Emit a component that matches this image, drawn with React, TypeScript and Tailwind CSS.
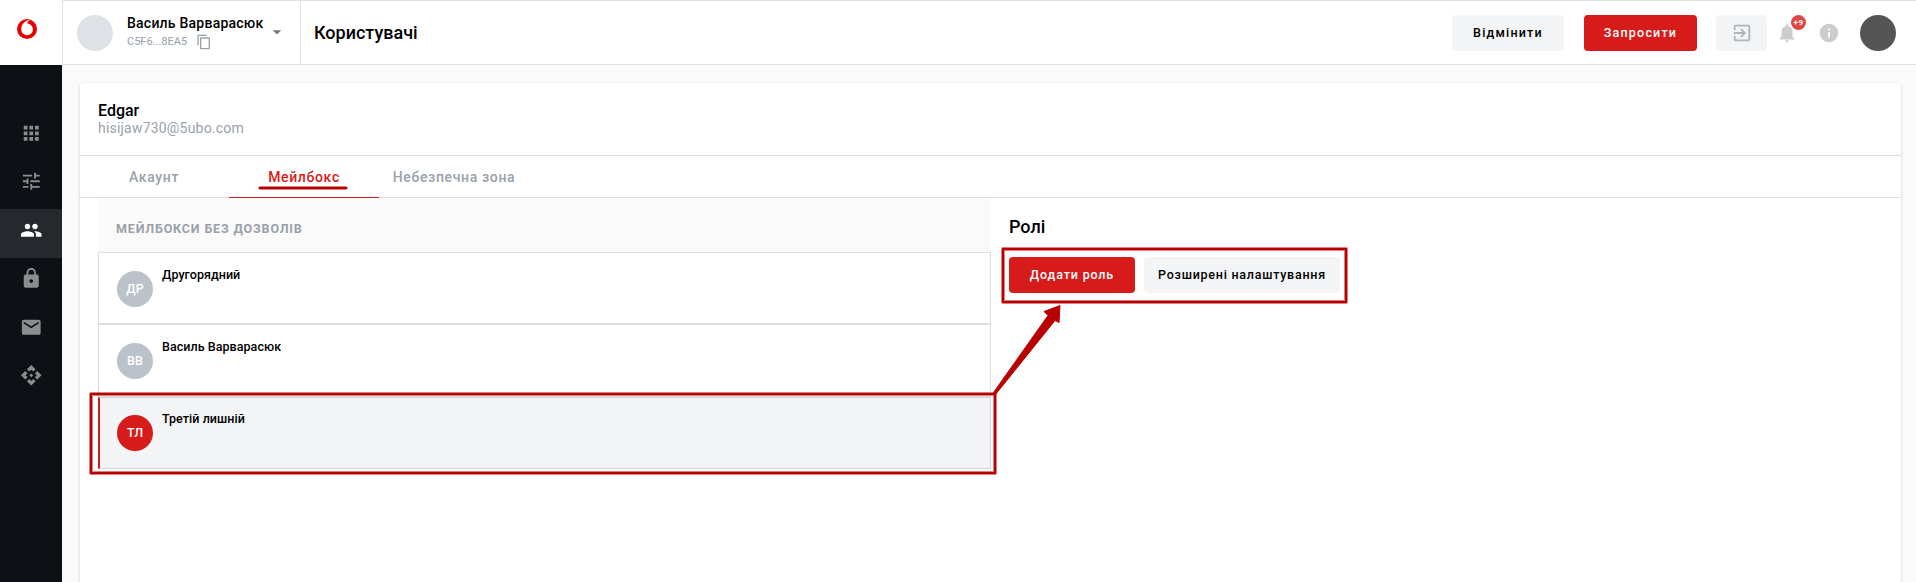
import { MdApps, MdTune, MdPeople, MdLock, MdEmail, MdApi, MdContentCopy, MdArrowDropDown, MdExitToApp, MdNotifications, MdInfo } from "react-icons/md";

const navItems = [
  { Icon: MdApps, label: "apps", active: false },
  { Icon: MdTune, label: "settings", active: false },
  { Icon: MdPeople, label: "users", active: true },
  { Icon: MdLock, label: "security", active: false },
  { Icon: MdEmail, label: "mail", active: false },
  { Icon: MdApi, label: "api", active: false },
];

const tabs = [
  { label: "Акаунт", active: false },
  { label: "Мейлбокс", active: true },
  { label: "Небезпечна зона", active: false },
];

const mailboxes = [
  { initials: "ДР", name: "Другорядний", selected: false, box: "h-[72px] border-[#dedede] pt-[18px] pl-[18px]" },
  { initials: "ВВ", name: "Василь Варварасюк", selected: false, box: "h-[73px] border-[#dedede] pt-[18px] pl-[18px]" },
  { initials: "ТЛ", name: "Третій лишній", selected: true, box: "h-[72px] border-[#d3d5d8] border-l-2 border-l-[#d71a1a] bg-[#f3f4f6] pt-[17px] pl-[17px]" },
];

function Logo() {
  return (
    <svg viewBox="0 0 20 20" className="size-5">
      <circle cx="10" cy="10" r="10" fill="#e60000" />
      <path d="M10.300 4.200C10.400 2.500 12 1.100 13.800.7 10.500 .6 4.200 3.600 4.200 10.300A5.900 5.900 0 0 0 10.100 16.200 5.800 5.800 0 0 0 15.900 10.400C15.900 7 13.400 5.100 10.300 4.200Z" fill="#fff" />
    </svg>
  );
}

function Sidebar() {
  return (
    <aside className="flex w-[62px] shrink-0 flex-col bg-[#0d1115]">
      <div className="flex h-[65px] justify-center bg-white pt-[19px] pr-[8px]"><Logo /></div>
      <nav className="mt-[47px] flex flex-col">
        {navItems.map(({ Icon, label, active }) => (
          <a key={label} aria-label={label} className={`flex h-[48.5px] items-center justify-center pb-[6.5px] ${active ? "bg-[#25282c] text-white" : "text-[#8a8c8e]"}`}>
            <Icon size={22.5} />
          </a>
        ))}
      </nav>
    </aside>
  );
}

function Header() {
  return (
    <header className="flex h-[65px] items-stretch border-y border-l border-[#dee2e6] bg-white">
      <div className="flex w-[238px] border-r border-[#dee2e6] pt-[14px] pl-[14px]">
        <div className="size-9 rounded-full bg-[#dee2e6]" />
        <div className="ml-[14px] -mt-[1px]">
          <div className="text-sm leading-[18px] font-medium tracking-[0.23px] whitespace-nowrap">Василь Варварасюк</div>
          <div className="flex items-center text-[11px] leading-[18px] text-[#98a1ab]">
            <span className="mt-px">C5F6...8EA5</span>
            <MdContentCopy size={16} className="mt-px ml-[9px]" />
          </div>
        </div>
        <MdArrowDropDown size={20} className="mt-[7px] ml-[4px] shrink-0 text-[#757575]" />
      </div>
      <h1 className="pt-5 pl-[13px] text-lg leading-6 font-medium">Користувачі</h1>
      <div className="ml-auto flex items-start pt-[14px] pr-5 text-[12.5px] font-medium tracking-[1.2px]">
        <button className="h-9 w-28 rounded bg-[#f3f4f6]">Відмінити</button>
        <button className="ml-5 h-9 w-[113px] rounded bg-[#d71a1a] text-white">Запросити</button>
        <button className="ml-[19px] flex h-9 w-[51px] items-center justify-center rounded bg-[#f3f4f6] text-[#adb5bd]"><MdExitToApp size={22} /></button>
        <div className="relative ml-[9px] flex h-9 w-[22px] items-center justify-center text-[#ccc]">
          <MdNotifications size={22} />
          <span className="absolute top-0 left-[15px] flex size-[15px] items-center justify-center rounded-full bg-[#e04848] text-[8px] leading-none font-bold tracking-[0.5px] text-white">+9</span>
        </div>
        <MdInfo size={22} className="mt-[7px] ml-5 text-[#ccc]" />
        <div className="ml-5 size-9 rounded-full bg-[#555]" />
      </div>
    </header>
  );
}

function MailboxList() {
  return (
    <section className="w-[893px]">
      <h2 className="flex h-[54px] items-center bg-[#fafafa] pt-[9px] pl-[18px] text-[12.5px] font-bold tracking-[0.85px] text-[#98a1ab]">МЕЙЛБОКСИ БЕЗ ДОЗВОЛІВ</h2>
      {mailboxes.map(({ initials, name, selected, box }) => (
        <div key={initials} className={`flex border ${box}`}>
          <div className={`flex size-9 items-center justify-center rounded-full text-[12.5px] font-medium text-white ${selected ? "bg-[#d71a1a]" : "bg-[#bcc2ca]"}`}>{initials}</div>
          <div className="-mt-[5px] ml-[9px] text-[12.5px] leading-[18px] font-medium tracking-[0.05px]">{name}</div>
        </div>
      ))}
    </section>
  );
}

function Annotations() {
  return (
    <svg className="pointer-events-none absolute inset-0" width="1916" height="582" fill="none" stroke="#b90000">
      <g strokeWidth="4" strokeLinejoin="round" strokeOpacity="0.5">
        <rect x="91" y="394" width="904" height="79" />
        <rect x="1003" y="249" width="343" height="53" />
      </g>
      <g strokeWidth="2">
        <rect x="91" y="394" width="904" height="79" />
        <rect x="1003" y="249" width="343" height="53" />
      </g>
      <path d="M260 188H346" strokeWidth="3" strokeLinecap="round" />
      <path d="M993.500 392.500 1048 315.500 1044 311.500 1060 305.500 1059 322.500 1055 320.500 995.500 394.500Z" fill="#b90000" stroke="#b90000" strokeWidth="1" strokeLinejoin="round" />
    </svg>
  );
}

export default function App() {
  return (
    <div className="relative flex h-[582px] w-[1916px] overflow-hidden bg-[#fafafa] font-['Roboto',sans-serif] text-black">
      <Sidebar />
      <div className="flex min-w-0 flex-1 flex-col">
        <Header />
        <main className="mt-[18px] mr-[15px] ml-[18px] flex-1 rounded-t bg-white shadow-[0_1px_3px_rgba(0,0,0,0.2)]">
          <div className="h-[73px] border-b border-[#dedede] pt-[19px] pl-[18px]">
            <div className="text-base leading-[18px] font-medium">Edgar</div>
            <div className="text-sm leading-[17px] tracking-[0.2px] text-[#98a1ab]">hisijaw730@5ubo.com</div>
          </div>
          <div className="-ml-px flex h-[42px] border-b border-[#dedede]">
            {tabs.map(({ label, active }) => (
              <button key={label} className={`h-[42px] w-[150px] text-sm font-medium tracking-[0.65px] whitespace-nowrap ${active ? "border-b border-[#d71a1a] text-[#d71a1a]" : "text-[#98a1ab]"}`}>{label}</button>
            ))}
          </div>
          <div className="flex pl-[18px]">
            <MailboxList />
            <section className="pt-[17px] pl-[18px]">
              <h2 className="text-lg leading-6 font-medium">Ролі</h2>
              <div className="mt-[18px] flex gap-[9px] text-[12.5px] font-medium">
                <button className="h-9 w-[126px] rounded bg-[#d71a1a] tracking-[0.85px] text-white">Додати роль</button>
                <button className="h-9 w-[196px] rounded bg-[#f3f4f6] tracking-[0.75px]">Розширені налаштування</button>
              </div>
            </section>
          </div>
        </main>
      </div>
      <Annotations />
    </div>
  );
}
